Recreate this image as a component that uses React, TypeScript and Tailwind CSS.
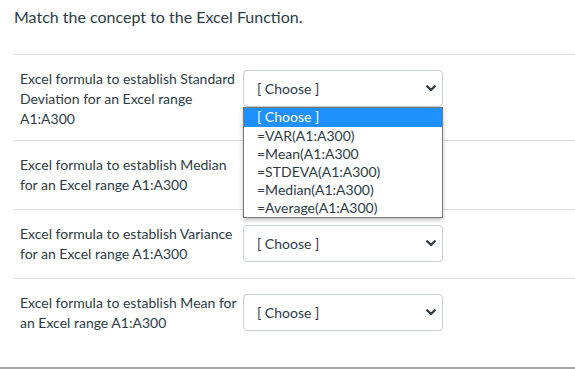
import React from "react";

const font = { fontFamily: "Lato, 'Open Sans', sans-serif" };

function Chevron() {
  return (
    <svg width="10" height="7" viewBox="0 0 10 7" className="block">
      <path d="M1.2 1.2 L5 5 L8.8 1.2" fill="none" stroke="#2d3b45" strokeWidth="2.2" strokeLinecap="round" strokeLinejoin="round" />
    </svg>
  );
}

function Select() {
  return (
    <div className="mt-px flex h-[37px] w-[200px] shrink-0 items-center justify-between rounded-[4px] border border-[#c7cdd1] bg-white pl-[13px] pr-[6px] text-[14px] text-[#2d3b45]">
      <span>[ Choose ]</span>
      <Chevron />
    </div>
  );
}

function Row({ label, pb, last }: { label: string; pb: string; last?: boolean }) {
  return (
    <div className={`ml-[14px] flex items-start gap-[3px] pl-[6px] pt-[14px] ${pb} ${last ? "" : "border-b border-[#dadddf]"}`}>
      <div className="w-[220px] shrink-0 text-[14px] leading-[20px] text-[#2d3b45]">{label}</div>
      <Select />
    </div>
  );
}

const options = ["[ Choose ]", "=VAR(A1:A300)", "=Mean(A1:A300", "=STDEVA(A1:A300)", "=Median(A1:A300)", "=Average(A1:A300)"];

export default function App() {
  return (
    <div style={font} className="relative h-[369px] w-[575px] overflow-hidden bg-white">
      <div className="pl-[14px] pt-[5px] text-[16px] leading-6 text-[#2d3b45]">Match the concept to the Excel Function.</div>
      <div className="ml-[14px] mt-[25px] border-t border-[#dadddf]" />
      <Row label="Excel formula to establish Standard Deviation for an Excel range A1:A300" pb="pb-[11px]" />
      <Row label="Excel formula to establish Median for an Excel range A1:A300" pb="pb-[14px]" />
      <Row label="Excel formula to establish Variance for an Excel range A1:A300" pb="pb-[14px]" />
      <Row label="Excel formula to establish Mean for an Excel range A1:A300" pb="pb-[34px]" last />
      <div className="border-t-2 border-[#a8a8a8]" />

      <div className="absolute left-[243px] top-[107px] w-[200px] border border-[#7a7a7a] bg-white text-[14px] text-[#2d3b45] shadow-[0_2px_4px_rgba(0,0,0,0.25)]">
        {options.map((o, i) => (
          <div
            key={o}
            className={`pl-[13px] leading-[18px] ${i === 0 ? "h-[19px] bg-[#1e90ff] text-white" : "h-[18px]"}`}
          >
            {o}
          </div>
        ))}
      </div>
    </div>
  );
}
